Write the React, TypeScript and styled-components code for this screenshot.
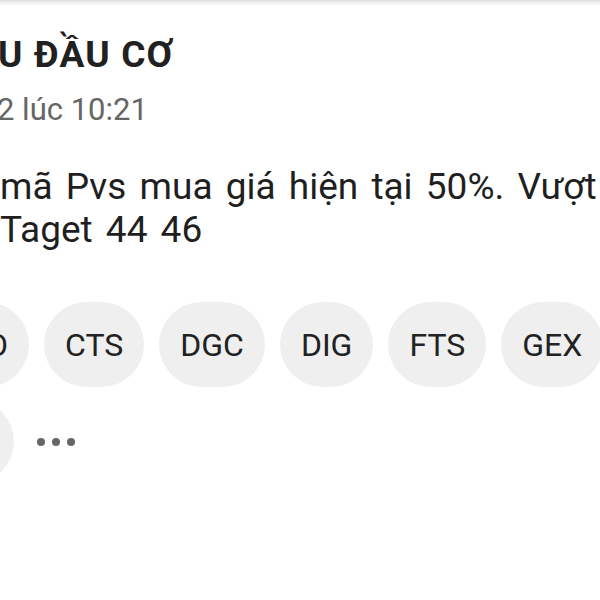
import React from 'react';
import styled, { createGlobalStyle } from 'styled-components';

const Global = createGlobalStyle`
    html, body {
        margin: 0;
        padding: 0;
        background: #ffffff;
    }
    body {
        font-family: Roboto, "Noto Sans", sans-serif;
    }
`

const Page = styled.div`
    width: 600px;
    height: 600px;
    overflow: hidden;
    background: #ffffff;
    display: flex;
    flex-direction: column;
`

const TopShade = styled.div`
    height: 5px;
    flex-shrink: 0;
    background: linear-gradient(#d9d9d9, #eeeeee 40%, #fbfbfb);
`

const Post = styled.div`
    display: flex;
    flex-direction: column;
    padding-top: 28px;
`

const Title = styled.div<{ $shift: number }>`
    margin-left: ${p => p.$shift}px;
    font-size: 37px;
    line-height: 44px;
    font-weight: 700;
    letter-spacing: 1.2px;
    color: #212121;
    white-space: nowrap;
`

const Meta = styled.div<{ $shift: number }>`
    margin: 13px 0 0 ${p => p.$shift}px;
    font-size: 31px;
    line-height: 40px;
    color: #666666;
    white-space: nowrap;
`

const Body = styled.div<{ $shift: number }>`
    margin: 35px 0 0 ${p => p.$shift}px;
    font-size: 37px;
    line-height: 43px;
    word-spacing: 4px;
    color: #1f1f1f;
    white-space: nowrap;
`

const Tags = styled.div`
    display: flex;
    flex-direction: column;
    gap: 12px;
    margin-top: 51px;
`

const TagRow = styled.div<{ $shift: number }>`
    display: flex;
    align-items: center;
    gap: 15px;
    margin-left: ${p => p.$shift}px;
`

const Tag = styled.div`
    height: 85px;
    padding: 0 21px;
    border-radius: 43px;
    background: #efefef;
    display: flex;
    align-items: center;
    font-size: 32px;
    color: #222222;
    white-space: nowrap;
    flex-shrink: 0;
`

const More = styled.div`
    display: flex;
    gap: 7px;
    padding: 0 8px;
    span {
        width: 8px;
        height: 8px;
        border-radius: 50%;
        background: #666666;
    }
`

const firstRow = ['CEO', 'CTS', 'DGC', 'DIG', 'FTS', 'GEX', 'HPG'];

export default function App() {
    return (
        <Page>
            <Global />
            <TopShade />
            <Post>
                <Title $shift={-2}>U ĐẦU CƠ</Title>
                <Meta $shift={-3}>2 lúc 10:21</Meta>
                <Body $shift={0}>
                    mã Pvs mua giá hiện tại 50%. Vượt
                    <br />
                    Taget 44 46
                </Body>
                <Tags>
                    <TagRow $shift={-74}>
                        {firstRow.map(t => <Tag key={t}>{t}</Tag>)}
                    </TagRow>
                    <TagRow $shift={-92}>
                        <Tag>VND</Tag>
                        <More><span /><span /><span /></More>
                    </TagRow>
                </Tags>
            </Post>
        </Page>
    );
}
